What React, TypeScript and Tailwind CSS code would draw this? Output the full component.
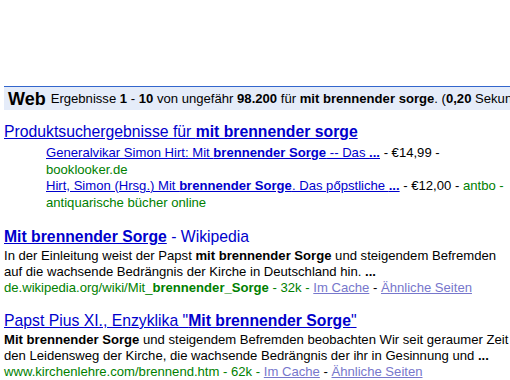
import React from 'react';

const font = { fontFamily: '"Liberation Sans", Arial, sans-serif' };

function CacheLinks() {
    return (
        <>
            <a className="text-[#7777cc] underline">Im Cache</a>
            <span className="text-black"> - </span>
            <a className="text-[#7777cc] underline">Ähnliche Seiten</a>
        </>
    );
}

function App() {
    return (
        <div
            className="w-[510px] h-[380px] overflow-hidden bg-white text-black text-[13.1px] pt-[86px]"
            style={font}
        >
            {/* results bar */}
            <div className="ml-[4px] h-[24px] flex items-center gap-[5px] whitespace-nowrap overflow-hidden border-t border-[#3366cc] bg-[#e5ecf9] pl-[4px]">
                <b className="text-[18px] leading-none">Web</b>
                <span>
                    Ergebnisse <b>1</b> - <b>10</b> von ungefähr <b>98.200</b> für{' '}
                    <b>mit brennender sorge</b>. (<b>0,20</b> Sekunden)
                </span>
            </div>

            <div className="px-[4px] whitespace-nowrap">
                {/* product results */}
                <div className="mt-[11px]">
                    <a className="block text-[15.75px] leading-[22px] text-[#0000cc] underline">
                        Produktsuchergebnisse für <b>mit brennender sorge</b>
                    </a>
                    <div className="mt-[2px] pl-[42px] leading-[16.5px]">
                        <div>
                            <a className="text-[#0000cc] underline">
                                Generalvikar Simon Hirt: Mit <b>brennender Sorge</b> -- Das <b>...</b>
                            </a>{' '}
                            - €14,99 -
                        </div>
                        <div className="text-[#008000]">booklooker.de</div>
                        <div>
                            <a className="text-[#0000cc] underline">
                                Hirt, Simon (Hrsg.) Mit <b>brennender Sorge</b>. Das pőpstliche <b>...</b>
                            </a>{' '}
                            - €12,00 - <span className="text-[#008000]">antbo -</span>
                        </div>
                        <div className="text-[#008000]">antiquarische bücher online</div>
                    </div>
                </div>

                {/* wikipedia */}
                <div className="mt-[15px]">
                    <div className="text-[15.75px] leading-[22px] text-[#0000cc]">
                        <a className="underline">
                            <b>Mit brennender Sorge</b>
                        </a>{' '}
                        - Wikipedia
                    </div>
                    <div className="leading-[16px]">
                        <div>
                            In der Einleitung weist der Papst <b>mit brennender Sorge</b> und steigendem Befremden
                        </div>
                        <div>
                            auf die wachsende Bedrängnis der Kirche in Deutschland hin. <b>...</b>
                        </div>
                        <div>
                            <span className="text-[#008000]">
                                de.wikipedia.org/wiki/Mit_<b>brennender_Sorge</b> - 32k -{' '}
                            </span>
                            <CacheLinks />
                        </div>
                    </div>
                </div>

                {/* kirchenlehre */}
                <div className="mt-[14px]">
                    <a className="block text-[15.75px] leading-[22px] text-[#0000cc] underline">
                        Papst Pius XI., Enzyklika "<b>Mit brennender Sorge</b>"
                    </a>
                    <div className="leading-[16px]">
                        <div>
                            <b>Mit brennender Sorge</b> und steigendem Befremden beobachten Wir seit geraumer Zeit
                        </div>
                        <div>
                            den Leidensweg der Kirche, die wachsende Bedrängnis der ihr in Gesinnung und <b>...</b>
                        </div>
                        <div>
                            <span className="text-[#008000]">www.kirchenlehre.com/brennend.htm - 62k - </span>
                            <CacheLinks />
                        </div>
                    </div>
                </div>
            </div>
        </div>
    );
}

export default App;
